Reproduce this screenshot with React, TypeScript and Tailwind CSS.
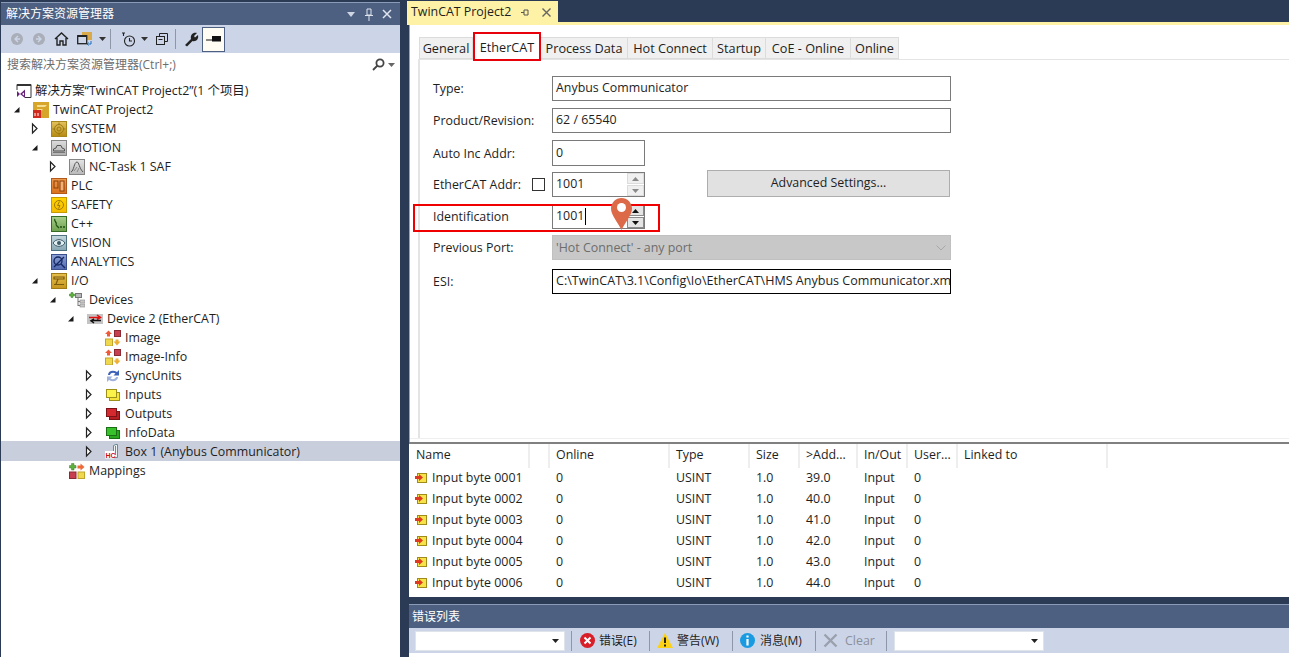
import React from "react";

const FONT = { fontFamily: '"Open Sans","Noto Sans CJK SC",sans-serif' };

function Expand({ state }: { state?: "open" | "closed" }) {
  if (state === "open")
    return (
      <svg width="20" height="19" viewBox="0 0 20 19" className="shrink-0">
        <path d="M1 12.5 L6.5 12.5 L6.5 7 Z" fill="#1a1a1a" />
      </svg>
    );
  if (state === "closed")
    return (
      <svg width="20" height="19" viewBox="0 0 20 19" className="shrink-0">
        <path d="M1.5 5 L6 9.5 L1.5 14 Z" fill="#fff" stroke="#222" strokeWidth="1.2" />
      </svg>
    );
  return <span className="w-[20px] shrink-0" />;
}

function Tile({ from, to, edge, children }: { from: string; to: string; edge: string; children?: React.ReactNode }) {
  const id = "g" + from.slice(1) + to.slice(1);
  return (
    <svg width="16" height="16" viewBox="0 0 16 16" className="shrink-0">
      <defs>
        <linearGradient id={id} x1="0" y1="0" x2="0" y2="1">
          <stop offset="0" stopColor={from} />
          <stop offset="1" stopColor={to} />
        </linearGradient>
      </defs>
      <rect x="0.5" y="0.5" width="15" height="15" fill={`url(#${id})`} stroke={edge} />
      {children}
    </svg>
  );
}

function Stack({ a, b, edge }: { a: string; b: string; edge: string }) {
  return (
    <svg width="16" height="16" viewBox="0 0 16 16" className="shrink-0">
      <rect x="4.5" y="5.5" width="10" height="8" fill={b} stroke={edge} />
      <rect x="1.5" y="2.5" width="10" height="8" fill={a} stroke={edge} />
    </svg>
  );
}

function ImageIcon() {
  return (
    <svg width="16" height="16" viewBox="0 0 16 16" className="shrink-0">
      <rect x="9.5" y="0.5" width="6" height="6" fill="#c8404f" stroke="#8a2a35" />
      <rect x="0.5" y="9" width="7" height="7" fill="#f0d84e" stroke="#bfa52c" />
      <path d="M3.5 0.5 L7 4 L5 4 L5 6.5 L2 6.5 L2 4 L0 4 Z" fill="#ee5a3a" />
      <path d="M12 15.5 L15.5 11.5 L13.5 11.5 L13.5 9.5 L10.5 9.5 L10.5 11.5 L8.5 11.5 Z" fill="#eeb034" />
    </svg>
  );
}

const Gear = (
  <g fill="none" stroke="#9a7a15" strokeWidth="1">
    <circle cx="8" cy="8" r="4.5" />
    <circle cx="8" cy="8" r="2" />
    <path d="M8 1.5 V3.5 M8 12.5 V14.5 M1.5 8 H3.5 M12.5 8 H14.5" />
  </g>
);

const tree: { l: number; t: string; e?: "open" | "closed"; i: React.ReactNode; sel?: boolean }[] = [
  {
    l: 0,
    t: "解决方案“TwinCAT Project2”(1 个项目)",
    i: (
      <svg width="16" height="16" viewBox="0 0 16 16" className="shrink-0">
        <path d="M1 1.5 H15 V14.5 H9" fill="none" stroke="#333" />
        <path d="M1 1.5 V7" stroke="#333" />
        <rect x="1" y="1" width="14" height="2" fill="#333" />
        <path d="M1 8 L4 11 L1 14 Z M4 11 L9 6.5 V15 Z" fill="#68217a" />
        <path d="M6 11 L8 9.5 V12.5 Z" fill="#fff" />
      </svg>
    ),
  },
  {
    l: 1,
    t: "TwinCAT Project2",
    e: "open",
    i: (
      <svg width="16" height="16" viewBox="0 0 16 16" className="shrink-0">
        <rect x="0" y="0" width="16" height="16" fill="#d6a529" />
        <path d="M4 3 H14 L12 5 H4 Z M4 7 H10 L8 9 H4 Z" fill="#f3dd8f" />
        <rect x="0" y="8" width="8" height="8" fill="#cf2a1d" />
        <path d="M2 11 V14 M5 11 V14" stroke="#fff" />
      </svg>
    ),
  },
  { l: 2, t: "SYSTEM", e: "closed", i: <Tile from="#e3c25c" to="#b58a12" edge="#a9861c">{Gear}</Tile> },
  {
    l: 2,
    t: "MOTION",
    e: "open",
    i: (
      <Tile from="#dcdcdc" to="#b0b0b0" edge="#858585">
        <path d="M2.5 11 V9 L5 8 L6 5.5 H10 L11 8 L13.5 9 V11 Z" fill="none" stroke="#555" />
        <path d="M2 12.5 H14" stroke="#777" />
      </Tile>
    ),
  },
  {
    l: 3,
    t: "NC-Task 1 SAF",
    e: "closed",
    i: (
      <Tile from="#e4e4e4" to="#b8b8b8" edge="#858585">
        <path d="M2 13 C5 12 5 3 8 3 C10 3 10 9 14 13" fill="none" stroke="#555" />
        <path d="M5 12 L8 8 M8 13 L10 9" stroke="#777" strokeWidth="0.8" />
      </Tile>
    ),
  },
  {
    l: 2,
    t: "PLC",
    i: (
      <Tile from="#ee9a4c" to="#d9701c" edge="#b3591c">
        <rect x="3" y="3" width="4" height="7" fill="none" stroke="#8a3f0c" />
        <rect x="9" y="3" width="4" height="10" fill="#f3b273" stroke="#8a3f0c" />
      </Tile>
    ),
  },
  {
    l: 2,
    t: "SAFETY",
    i: (
      <Tile from="#ffd400" to="#f5bb00" edge="#c79a00">
        <circle cx="8" cy="8" r="4.5" fill="none" stroke="#a07a00" />
        <path d="M8.5 4.5 L6.5 8.5 H9 L7.5 11.5" fill="none" stroke="#a07a00" />
      </Tile>
    ),
  },
  {
    l: 2,
    t: "C++",
    i: (
      <Tile from="#a8cf8c" to="#6ea04e" edge="#356b25">
        <path d="M4 3 C2 5 7 6 5 9 M5 9 L8 12 M9 11 H11 M12 11 H14" fill="none" stroke="#1e5212" strokeWidth="1.3" />
      </Tile>
    ),
  },
  {
    l: 2,
    t: "VISION",
    i: (
      <Tile from="#c4d6de" to="#87a6b3" edge="#4f7280">
        <path d="M2 8 C5 3.5 11 3.5 14 8 C11 12.5 5 12.5 2 8 Z" fill="#e3eef2" stroke="#3c5a67" />
        <circle cx="8" cy="8" r="2" fill="#3c5a67" />
      </Tile>
    ),
  },
  {
    l: 2,
    t: "ANALYTICS",
    i: (
      <Tile from="#8ea3d8" to="#4f68ad" edge="#3a4f8c">
        <circle cx="7" cy="7" r="4" fill="none" stroke="#15255f" strokeWidth="1.3" />
        <path d="M3 13 L13 3 M10 10 L14 14" stroke="#15255f" strokeWidth="1.3" />
      </Tile>
    ),
  },
  {
    l: 2,
    t: "I/O",
    e: "open",
    i: (
      <Tile from="#e6bf4e" to="#c4951e" edge="#a07a12">
        <path d="M3 4 H13 V6 H3 Z M7 6 L5 11 M3 11.5 H13" fill="none" stroke="#7a5a0c" strokeWidth="1.2" />
      </Tile>
    ),
  },
  {
    l: 3,
    t: "Devices",
    e: "open",
    i: (
      <svg width="16" height="16" viewBox="0 0 16 16" className="shrink-0">
        <rect x="6.5" y="1.5" width="6" height="4" fill="#b8b8b8" stroke="#777" />
        <path d="M9 6 V14 M9 9.5 H11 M9 13.5 H11" stroke="#777" />
        <rect x="11" y="8" width="5" height="3" fill="#c8c8c8" stroke="#888" strokeWidth="0.6" />
        <rect x="11" y="12" width="5" height="3" fill="#c8c8c8" stroke="#888" strokeWidth="0.6" />
        <path d="M2 0.5 H4 V2 H5.5 V4 H4 V5.5 H2 V4 H0.5 V2 H2 Z" fill="#5fb040" stroke="#3c7f28" strokeWidth="0.5" />
      </svg>
    ),
  },
  {
    l: 4,
    t: "Device 2 (EtherCAT)",
    e: "open",
    i: (
      <svg width="16" height="16" viewBox="0 0 16 16" className="shrink-0">
        <rect x="0" y="3" width="16" height="10" fill="#c4c4c4" />
        <path d="M2 6.5 H12 M10 4 L13.5 6.5 L10 8.5" fill="none" stroke="#e01010" strokeWidth="1.5" />
        <path d="M14 9.5 H5 M7 8 L4 9.8 L7 12" fill="none" stroke="#111" strokeWidth="1.5" />
      </svg>
    ),
  },
  { l: 5, t: "Image", i: <ImageIcon /> },
  { l: 5, t: "Image-Info", i: <ImageIcon /> },
  {
    l: 5,
    t: "SyncUnits",
    e: "closed",
    i: (
      <svg width="16" height="16" viewBox="0 0 16 16" className="shrink-0">
        <path d="M3 7 C3 3 8 1.5 12 4 L14 2 V7.5 H8.5 L10.5 5.5 C8 4 5.5 5 5 7 Z" fill="#3d63b8" />
        <path d="M13 9 C13 13 8 14.5 4 12 L2 14 V8.5 H7.5 L5.5 10.5 C8 12 10.5 11 11 9 Z" fill="#9fb2dc" />
      </svg>
    ),
  },
  { l: 5, t: "Inputs", e: "closed", i: <Stack a="#fbf24a" b="#f3e33a" edge="#9c8f1a" /> },
  { l: 5, t: "Outputs", e: "closed", i: <Stack a="#d42a2f" b="#b81d24" edge="#7a1216" /> },
  { l: 5, t: "InfoData", e: "closed", i: <Stack a="#37c22c" b="#28a81f" edge="#1a6e14" /> },
  {
    l: 5,
    t: "Box 1 (Anybus Communicator)",
    e: "closed",
    sel: true,
    i: (
      <svg width="16" height="16" viewBox="0 0 16 16" className="shrink-0">
        <path d="M8.5 2.5 L11 1.5 H12.5 V14.5 H8.5 Z M10.5 3 V12" fill="#eef3f5" stroke="#6e8790" />
        <rect x="0" y="8" width="9" height="7.5" fill="#fff" />
        <text x="0.5" y="14.5" fontSize="7" fontWeight="700" fill="#d01010" fontFamily="Liberation Sans">HC</text>
      </svg>
    ),
  },
  {
    l: 3,
    t: "Mappings",
    i: (
      <svg width="16" height="16" viewBox="0 0 16 16" className="shrink-0">
        <rect x="0.5" y="9" width="6.5" height="6.5" fill="#c8404f" stroke="#8a2a35" />
        <rect x="9" y="9" width="6.5" height="6.5" fill="#f0d84e" stroke="#bfa52c" />
        <path d="M2.5 0.5 H5 V2.5 H7 V5 H5 V7 H2.5 V5 H0.5 V2.5 H2.5 Z" fill="#5fb040" stroke="#3c7f28" strokeWidth="0.5" />
        <path d="M8.5 2.5 H11.5 V0.5 L15.5 4 L11.5 7.5 V5.5 H8.5 Z" fill="#ee6a3a" />
      </svg>
    ),
  },
];

function TreeRow({ r }: { r: (typeof tree)[number] }) {
  return (
    <div
      className={`flex items-center text-[12.4px] leading-[19px] text-[#1e1e1e] whitespace-nowrap ${r.sel ? "bg-[#c9cedd] h-[20px] -mt-px" : "h-[19px]"}`}
      style={{ paddingLeft: r.l === 0 ? 15 : 18 * r.l - 6 }}
    >
      {r.l > 0 && <Expand state={r.e} />}
      {r.i}
      <span className={r.l === 0 ? "ml-[3px]" : "ml-[4px]"}>{r.t}</span>
    </div>
  );
}

function Caret({ c = "#333" }: { c?: string }) {
  return (
    <svg width="7" height="4" viewBox="0 0 7 4" className="shrink-0">
      <path d="M0 0 H7 L3.5 4 Z" fill={c} />
    </svg>
  );
}

function ToolSep() {
  return <span className="block w-px h-[20px] bg-[#8e97a8] shrink-0" />;
}

function Explorer() {
  return (
    <div className="w-[399px] h-[655px] ml-px mt-[2px] flex flex-col shrink-0 bg-white">
      <div className="h-[23px] bg-[#4d6082] border-t border-[#8a9bb8] flex items-center pl-[5px] text-white text-[12px] shrink-0">
        <span className="flex-1">解决方案资源管理器</span>
        <svg width="8" height="5" viewBox="0 0 8 5" className="mr-[9px]"><path d="M0 0 H8 L4 5 Z" fill="#cfd6e3" /></svg>
        <svg width="10" height="13" viewBox="0 0 10 13" className="mr-[8px]" fill="none" stroke="#dfe4ee"><path d="M3 1 H7 V7 H3 Z M1 7.5 H9 M5 8 V13" /></svg>
        <svg width="10" height="10" viewBox="0 0 10 10" className="mr-[8px]" stroke="#dfe4ee" strokeWidth="1.5"><path d="M1 1 L9 9 M9 1 L1 9" /></svg>
      </div>
      <div className="h-[28px] bg-[#ccd5e8] flex items-center pl-[10px] shrink-0">
        <svg width="12" height="12" viewBox="0 0 12 12"><circle cx="6" cy="6" r="6" fill="#a9aeb8" /><path d="M7 3 L4 6 L7 9 M4 6 H9" stroke="#ccd5e8" strokeWidth="1.4" fill="none" /></svg>
        <svg width="12" height="12" viewBox="0 0 12 12" className="ml-[10px]"><circle cx="6" cy="6" r="6" fill="#a9aeb8" /><path d="M5 3 L8 6 L5 9 M8 6 H3" stroke="#ccd5e8" strokeWidth="1.4" fill="none" /></svg>
        <svg width="15" height="14" viewBox="0 0 15 14" className="ml-[9px]" fill="none" stroke="#222" strokeWidth="1.4"><path d="M1 7 L7.5 1 L14 7 M3 6 V13 H6 V9 H9 V13 H12 V6" /></svg>
        <svg width="15" height="14" viewBox="0 0 15 14" className="ml-[8px]"><rect x="5" y="0" width="10" height="8" fill="#d9a94a" /><rect x="0.7" y="3.7" width="9" height="8" fill="#ccd5e8" stroke="#222" strokeWidth="1.3" /><rect x="1" y="3" width="8" height="2" fill="#222" /><path d="M14 9 V12 H10 M11.5 10.5 L10 12 L11.5 13.5" fill="none" stroke="#1c6ec0" /></svg>
        <span className="ml-[7px]"><Caret /></span>
        <span className="ml-[4px]"><ToolSep /></span>
        <svg width="15" height="15" viewBox="0 0 15 15" className="ml-[10px]" fill="none" stroke="#222" strokeWidth="1.1"><circle cx="8.5" cy="9" r="5" /><path d="M8.5 6 V9 H11 M1 1 H4 M2.5 1 V4" /></svg>
        <span className="ml-[5px]"><Caret /></span>
        <svg width="12" height="12" viewBox="0 0 12 12" className="ml-[8px]" fill="none" stroke="#222"><rect x="0.5" y="3.5" width="8" height="8" /><path d="M3.5 3.5 V0.5 H11.5 V8.5 H8.5 M2.5 6.5 H6.5" /></svg>
        <span className="ml-[7px]"><ToolSep /></span>
        <svg width="15" height="15" viewBox="0 0 15 15" className="ml-[8px]"><path d="M1 13 L7 7 C6 3 9 0 13 1 L10 4 L11 5.5 L14 3 C15 7 12 10 8.5 9 L3 14.5 Z" fill="#222" /></svg>
        <span className="ml-[3px] w-[23px] h-[25px] bg-[#fffcf4] border border-[#4d6082] flex items-center justify-center">
          <svg width="16" height="8" viewBox="0 0 16 8"><path d="M0 5 H6 M6 6 H15" stroke="#111" strokeWidth="1" /><rect x="6" y="1" width="9" height="5" fill="#111" /></svg>
        </span>
      </div>
      <div className="h-[23px] bg-white flex items-center pl-[6px] pr-[5px] text-[12px] text-[#6d6d6d] shrink-0">
        <span className="flex-1">搜索解决方案资源管理器(Ctrl+;)</span>
        <svg width="13" height="13" viewBox="0 0 13 13" fill="none" stroke="#444" strokeWidth="1.8" className="mr-[3px]"><circle cx="8" cy="5" r="3.6" /><path d="M5.5 7.5 L1 12" /></svg>
        <Caret c="#666" />
      </div>
      <div className="h-[5px] shrink-0" />
      <div className="flex-1 min-h-0">
        {tree.map((r) => (
          <TreeRow key={r.t} r={r} />
        ))}
      </div>
    </div>
  );
}

const tabs = [
  { t: "General", w: 54 },
  { t: "EtherCAT", w: 68, on: true },
  { t: "Process Data", w: 87 },
  { t: "Hot Connect", w: 85 },
  { t: "Startup", w: 53 },
  { t: "CoE - Online", w: 85 },
  { t: "Online", w: 48 },
];

function Label({ children }: { children: React.ReactNode }) {
  return <span className="w-[132px] shrink-0 text-[12.4px] text-[#1e1e1e] leading-none pl-[13px] pt-[2px] whitespace-nowrap">{children}</span>;
}

function Input({ w, children, cls = "border-[#7a7a7a]" }: { w: string; children: React.ReactNode; cls?: string }) {
  return (
    <div className={`${w} border ${cls} bg-white flex items-center pl-[3px] text-[12.4px] text-[#1e1e1e] whitespace-nowrap overflow-hidden shrink-0`}>
      {children}
    </div>
  );
}

function Spin({ active }: { active?: boolean }) {
  const c = active ? "#111" : "#8a8a8a";
  const b = active ? "bg-[#e4e4e4] border-[#8a8a8a]" : "bg-[#f0f0f0] border-[#dcdcdc]";
  return (
    <div className="ml-auto w-[17px] h-[23px] flex flex-col gap-px shrink-0">
      <span className={`h-[11px] border ${b} flex items-center justify-center`}>
        <svg width="7" height="4" viewBox="0 0 7 4"><path d="M0 4 H7 L3.5 0 Z" fill={c} /></svg>
      </span>
      <span className={`h-[11px] border ${b} flex items-center justify-center`}>
        <svg width="7" height="4" viewBox="0 0 7 4"><path d="M0 0 H7 L3.5 4 Z" fill={c} /></svg>
      </span>
    </div>
  );
}

function Form() {
  return (
    <div className="flex-1 min-h-0 pt-[16px]">
      <div className="flex items-center h-[25px]"><Label>Type:</Label><Input w="w-[399px] h-[25px]"><span>Anybus Communicator</span></Input></div>
      <div className="flex items-center h-[25px] mt-[7px]"><Label>Product/Revision:</Label><Input w="w-[399px] h-[25px]"><span>62 / 65540</span></Input></div>
      <div className="flex items-center h-[26px] mt-[7px]"><Label>Auto Inc Addr:</Label><Input w="w-[93px] h-[26px]"><span>0</span></Input></div>
      <div className="flex items-center h-[25px] mt-[6px]">
        <span className="w-[112px] shrink-0 text-[12.4px] text-[#1e1e1e] leading-none pl-[13px] pt-[2px] whitespace-nowrap">EtherCAT Addr:</span>
        <span className="w-[13px] h-[13px] border border-[#333] bg-white shrink-0" />
        <span className="w-[7px] shrink-0" />
        <Input w="w-[93px] h-[25px]"><span>1001</span><Spin /></Input>
        <button className="ml-[62px] -mt-[2px] w-[243px] h-[27px] bg-[#e1e1e1] border border-[#adadad] text-[12.4px] text-[#1e1e1e] shrink-0">Advanced Settings...</button>
      </div>
      <div className="flex items-center h-[25px] mt-[7px]">
        <Label>Identification</Label>
        <Input w="w-[93px] h-[25px]"><span>1001</span><span className="w-px h-[17px] bg-black ml-px" /><Spin active /></Input>
      </div>
      <div className="flex items-center h-[25px] mt-[6px]">
        <Label>Previous Port:</Label>
        <div className="w-[399px] h-[25px] bg-[#c8c8c8] border border-[#c0c0c0] flex items-center pl-[3px] pt-px text-[12.4px] text-[#6d6d6d] shrink-0">
          <span className="flex-1">'Hot Connect' - any port</span>
          <svg width="10" height="6" viewBox="0 0 10 6" className="mr-[4px]" fill="none" stroke="#a8a8a8"><path d="M0.5 0.5 L5 5 L9.5 0.5" /></svg>
        </div>
      </div>
      <div className="flex items-center h-[25px] mt-[9px]">
        <Label>ESI:</Label>
        <Input w="w-[399px] h-[25px]" cls="border-black"><span className="text-[12.55px]">C:\TwinCAT\3.1\Config\Io\EtherCAT\HMS Anybus Communicator.xml</span></Input>
      </div>
    </div>
  );
}

const cols = ["Name", "", "Online", "Type", "Size", ">Add...", "In/Out", "User...", "Linked to"];
const rows = [
  ["0001", "39.0"],
  ["0002", "40.0"],
  ["0003", "41.0"],
  ["0004", "42.0"],
  ["0005", "43.0"],
  ["0006", "44.0"],
];

function Table() {
  return (
    <div className="h-[155px] bg-white border-t-2 border-[#808080] pl-px shrink-0 overflow-hidden">
      <div className="grid grid-cols-[120px_20px_120px_80px_50px_58px_50px_50px_150px] h-[24px] text-[12.4px] text-[#1e1e1e] w-max">
        {cols.map((c, i) => (
          <div key={i} className="flex items-center pl-[6px] pb-[2px] border-r-2 border-[#eeeeee] whitespace-nowrap overflow-hidden">{c}</div>
        ))}
      </div>
      {rows.map(([n, a]) => (
        <div key={n} className="grid grid-cols-[120px_20px_120px_80px_50px_58px_50px_50px_150px] h-[21px] items-center text-[12.4px] text-[#1e1e1e] w-max">
          <div className="flex items-center pl-[5px] col-span-2 whitespace-nowrap">
            <svg width="12" height="12" viewBox="0 0 12 12" className="shrink-0 mr-[5px]">
              <rect x="2.5" y="1.5" width="9" height="9" fill="#f8e24a" stroke="#a08a1a" />
              <path d="M0 4 H4 V2 L8 5.5 L4 9 V7 H0 Z" fill="#dd3a20" />
            </svg>
            Input byte {n}
          </div>
          <div className="pl-[6px]">0</div>
          <div className="pl-[6px]">USINT</div>
          <div className="pl-[6px]">1.0</div>
          <div className="pl-[6px]">{a}</div>
          <div className="pl-[6px]">Input</div>
          <div className="pl-[6px]">0</div>
          <div />
        </div>
      ))}
    </div>
  );
}

function Combo() {
  return (
    <div className="w-[150px] h-[20px] bg-white border border-[#dfe3ea] flex items-center justify-end pr-[5px] shrink-0">
      <Caret c="#222" />
    </div>
  );
}

function ErrorList() {
  const text = "text-[12px] text-[#1e1e1e] whitespace-nowrap pt-px";
  return (
    <div className="shrink-0 flex flex-col ml-[2px]">
      <div className="h-[24px] bg-[#4d6082] border-t border-[#8a9bb8] flex items-center pl-[3px] text-white text-[12px]">错误列表</div>
      <div className="h-[25px] bg-[#ccd5e8] flex items-center pl-[6px]">
        <Combo />
        <span className="ml-[6px]"><ToolSep /></span>
        <svg width="15" height="15" viewBox="0 0 15 15" className="ml-[8px]"><circle cx="7.5" cy="7.5" r="7.5" fill="#d81e28" /><path d="M4.5 4.5 L10.5 10.5 M10.5 4.5 L4.5 10.5" stroke="#fff" strokeWidth="2" /></svg>
        <span className={`${text} ml-[4px] w-[45px]`}>错误(E)</span>
        <span className="ml-[5px]"><ToolSep /></span>
        <svg width="16" height="15" viewBox="0 0 16 15" className="ml-[7px]"><path d="M8 0 L16 15 H0 Z" fill="#fcd116" /><path d="M8 4.5 V10 M8 11.5 V13.5" stroke="#111" strokeWidth="1.8" /></svg>
        <span className={`${text} ml-[4px] w-[50px]`}>警告(W)</span>
        <span className="ml-[5px]"><ToolSep /></span>
        <svg width="15" height="15" viewBox="0 0 15 15" className="ml-[7px]"><circle cx="7.5" cy="7.5" r="7.5" fill="#1a9ae0" /><path d="M7.5 6 V12.5 M7.5 2.5 V4.5" stroke="#fff" strokeWidth="2.2" /></svg>
        <span className={`${text} ml-[5px] w-[50px]`}>消息(M)</span>
        <span className="ml-[5px]"><ToolSep /></span>
        <svg width="15" height="15" viewBox="0 0 15 15" className="ml-[7px]"><path d="M1.5 1.5 L13.5 13.5 M13.5 1.5 L1.5 13.5" stroke="#9aa0ac" strokeWidth="2.4" /></svg>
        <span className="text-[12.4px] text-[#8b909c] ml-[7px] w-[36px] pt-[2px]">Clear</span>
        <span className="ml-[5px]"><ToolSep /></span>
        <span className="ml-[7px]"><Combo /></span>
      </div>
      <div className="h-[4px] bg-white" />
    </div>
  );
}

export default function App() {
  return (
    <div style={FONT} className="w-[1289px] h-[657px] bg-[#2b3a55] flex overflow-hidden relative">
      <Explorer />
      <div className="flex-1 min-w-0 flex flex-col pl-[7px] pt-px">
        <div className="h-[21px] w-[151px] bg-[#fdf2a6] flex items-center pl-[4px] pt-[2px] text-[12.4px] text-[#1e1e1e] shrink-0">
          <span className="flex-1 whitespace-nowrap">TwinCAT Project2</span>
          <svg width="9" height="9" viewBox="0 0 9 9" className="mr-[12px]" fill="none" stroke="#555"><path d="M0 4.5 H3 M3 2 V7 H7 V2 Z" /></svg>
          <svg width="9" height="9" viewBox="0 0 9 9" className="mr-[7px]" stroke="#666" strokeWidth="1.4"><path d="M0.5 0.5 L8.5 8.5 M8.5 0.5 L0.5 8.5" /></svg>
        </div>
        <div className="h-[3px] bg-[#fdf2a6] shrink-0" />
        <div className="flex-1 min-h-0 flex flex-col ml-[2px]">
          <div className="flex-1 min-h-0 bg-white flex flex-col pl-[8px] pt-[12px] border-l border-[#9aa3b5]">
            <div className="flex h-[22px] items-end shrink-0 pl-px">
              {tabs.map((t) => (
                <div
                  key={t.t}
                  style={{ width: t.w }}
                  className={`text-[12.7px] text-[#1e1e1e] flex items-center justify-center whitespace-nowrap shrink-0 ${t.on ? "bg-white h-[26px] pt-[3px] relative z-10" : "h-[22px] pt-[2px] bg-[#f0f0f0] border border-l-0 border-[#dcdcdc] first:border-l"}`}
                >
                  {t.t}
                </div>
              ))}
            </div>
            <div className="flex-1 min-h-0 border-l-2 border-t border-[#e4e4e4] flex flex-col">
              <Form />
            </div>
            <div className="h-[4px] bg-white border-t border-[#efefef] -ml-[8px] shrink-0" />
          </div>
          <Table />
        </div>
        <div className="h-[7px] shrink-0" />
        <ErrorList />
      </div>
      <div className="absolute left-[473px] top-[32px] w-[68px] h-[29px] border-2 border-[#e8000b] z-20" />
      <div className="absolute left-[413px] top-[204px] w-[247px] h-[28px] border-2 border-[#f00000] z-20" />
      <svg width="21" height="32" viewBox="0 0 21 32" className="absolute left-[611px] top-[198px] z-30">
        <path d="M10.5 0 C4.7 0 0 4.7 0 10.5 C0 17 6 23 10.5 32 C15 23 21 17 21 10.5 C21 4.7 16.3 0 10.5 0 Z" fill="#dc6a48" />
        <circle cx="10.5" cy="9.5" r="4.5" fill="#fff" />
      </svg>
    </div>
  );
}
